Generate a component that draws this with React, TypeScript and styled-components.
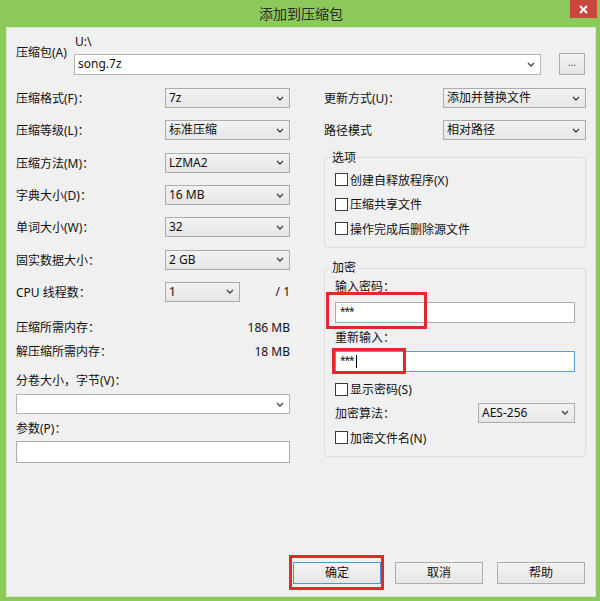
import React from 'react'
import styled, { createGlobalStyle } from 'styled-components'

const GlobalStyle = createGlobalStyle`
    html, body {
        margin: 0;
        padding: 0;
        background: #8bc95b;
    }
    * {
        box-sizing: border-box;
    }
`

const font = `"Noto Sans", "Noto Sans CJK SC", sans-serif`

const Window = styled.div`
    width: 600px;
    height: 601px;
    background: #8bc95b;
    padding: 0 4px 4px 6px;
    display: flex;
    flex-direction: column;
    font-family: ${font};
    font-size: 12px;
    color: #111;
`

const TitleBar = styled.div`
    height: 27px;
    display: grid;
    grid-template-columns: 1fr auto 1fr;
    align-items: start;
`

const Title = styled.div`
    grid-column: 2;
    line-height: 27px;
    font-size: 14px;
    color: #2a2a2a;
`

const CloseButton = styled.div`
    grid-column: 3;
    justify-self: end;
    width: 27px;
    height: 18px;
    margin-right: -1px;
    background: #c9473f;
    display: flex;
    align-items: center;
    justify-content: center;
`

const Body = styled.div`
    flex: 1;
    background: #f0f0f0;
    border: 1px solid #dbe8cf;
    padding: 7px 9px 12px 9px;
    display: flex;
    flex-direction: column;
`

const ArchiveRow = styled.div`
    display: flex;
`

const ArchiveLabel = styled.div`
    width: 58px;
    padding-top: 11px;
    line-height: 14px;
`

const ArchiveField = styled.div`
    flex: 1;
    display: flex;
    flex-direction: column;
`

const PathText = styled.div`
    line-height: 14px;
    padding-left: 1px;
    margin-bottom: 4px;
`

const ComboLine = styled.div`
    display: flex;
    align-items: center;
    gap: 18px;
`

const BrowseButton = styled.div`
    width: 26px;
    height: 22px;
    border: 1px solid #acacac;
    background: linear-gradient(#f2f2f2, #e5e5e5);
    display: flex;
    align-items: center;
    justify-content: center;
    font-size: 10px;
    color: #555;
    padding-bottom: 4px;
`

const Main = styled.div`
    display: grid;
    grid-template-columns: 274px 262px;
    column-gap: 34px;
    margin-top: 7px;
`

const Column = styled.div`
    display: flex;
    flex-direction: column;
`

const FieldRow = styled.div<{ $labelWidth: number }>`
    height: 32.3px;
    display: grid;
    grid-template-columns: ${p => p.$labelWidth}px 1fr;
    align-items: center;
`

const CpuCell = styled.div`
    display: flex;
    align-items: center;
    justify-content: space-between;
`

const SelectBox = styled.div<{ $width?: number; $height?: number; $editable?: boolean }>`
    width: ${p => (p.$width ? `${p.$width}px` : '100%')};
    height: ${p => p.$height || 20}px;
    border: 1px solid ${p => (p.$editable ? '#b5b5b5' : '#acacac')};
    background: ${p => (p.$editable ? '#ffffff' : 'linear-gradient(#f3f3f3, #e6e6e6)')};
    display: flex;
    align-items: center;
    justify-content: space-between;
    padding: 0 5px 0 3px;
    line-height: 14px;
`

const InfoRow = styled.div<{ $top?: number }>`
    height: 24px;
    margin-top: ${p => p.$top || 0}px;
    display: flex;
    align-items: center;
    justify-content: space-between;
`

const Label = styled.div<{ $top?: number }>`
    line-height: 14px;
    margin-top: ${p => p.$top || 0}px;
`

const Spaced = styled.div<{ $top: number }>`
    margin-top: ${p => p.$top}px;
`

const TextInput = styled.div<{ $height?: number; $focused?: boolean }>`
    width: 100%;
    height: ${p => p.$height || 21}px;
    background: #ffffff;
    border: 1px solid ${p => (p.$focused ? '#569de5' : '#abadb3')};
    display: flex;
    align-items: center;
    padding: 0 4px;
    line-height: 14px;
`

const Stars = styled.span`
    font-size: 10px;
    letter-spacing: -1px;
    margin-top: -3px;
`

const Caret = styled.span`
    display: inline-block;
    width: 1px;
    height: 13px;
    background: #000;
    margin-left: 2px;
`

const Group = styled.fieldset<{ $top: number }>`
    margin: ${p => p.$top}px 0 0 0;
    padding: 0 10px 6px 10px;
    border: 1px solid #dcdcdc;
    border-radius: 3px;
    min-width: 0;
`

const Legend = styled.legend`
    margin-left: -4px;
    padding: 0 1px;
    line-height: 14px;
`

const GroupContent = styled.div<{ $top: number }>`
    padding-top: ${p => p.$top}px;
    display: flex;
    flex-direction: column;
`

const CheckRow = styled.div<{ $top?: number }>`
    height: 24.5px;
    margin-top: ${p => p.$top || 0}px;
    display: flex;
    align-items: center;
    gap: 2px;
`

const CheckBox = styled.span`
    width: 13px;
    height: 13px;
    border: 1px solid #3a3a3a;
    background: #ffffff;
    flex-shrink: 0;
`

const AlgoRow = styled.div`
    height: 22px;
    display: flex;
    align-items: center;
    justify-content: space-between;
`

const Marked = styled.div`
    position: relative;
`

const RedMark = styled.div<{ $x: number; $y: number; $w: number; $h: number }>`
    position: absolute;
    left: ${p => p.$x}px;
    top: ${p => p.$y}px;
    width: ${p => p.$w}px;
    height: ${p => p.$h}px;
    border: 3px solid #e5262c;
    pointer-events: none;
`

const ButtonBar = styled.div`
    margin-top: auto;
    display: flex;
    justify-content: flex-end;
    gap: 14px;
    padding-right: 1px;
`

const Button = styled.div<{ $default?: boolean }>`
    width: 88px;
    height: 22px;
    border: 1px solid ${p => (p.$default ? '#3c9ce0' : '#acacac')};
    background: linear-gradient(#f3f3f3, #e5e5e5);
    display: flex;
    align-items: center;
    justify-content: center;
    line-height: 14px;
`

const Chevron: React.FC = () => (
    <svg width="8" height="5" viewBox="0 0 8 5">
        <path d="M1 1 L4 4 L7 1" fill="none" stroke="#444" strokeWidth="1.4" />
    </svg>
)

const Select: React.FC<{ value?: string; width?: number; height?: number; editable?: boolean }> = ({ value, width, height, editable }) => (
    <SelectBox $width={width} $height={height} $editable={editable}>
        <span>{value}</span>
        <Chevron />
    </SelectBox>
)

const leftFields = [
    { label: '压缩格式(F)：', value: '7z' },
    { label: '压缩等级(L)：', value: '标准压缩' },
    { label: '压缩方法(M)：', value: 'LZMA2' },
    { label: '字典大小(D)：', value: '16 MB' },
    { label: '单词大小(W)：', value: '32' },
    { label: '固实数据大小：', value: '2 GB' },
]

const options = ['创建自释放程序(X)', '压缩共享文件', '操作完成后删除源文件']

const App: React.FC = () => {
    return (
        <>
            <GlobalStyle />
            <Window>
                <TitleBar>
                    <Title>添加到压缩包</Title>
                    <CloseButton>
                        <svg width="9" height="9" viewBox="0 0 9 9">
                            <path d="M1 1 L8 8 M8 1 L1 8" stroke="#fff" strokeWidth="2" />
                        </svg>
                    </CloseButton>
                </TitleBar>
                <Body>
                    <ArchiveRow>
                        <ArchiveLabel>压缩包(A)</ArchiveLabel>
                        <ArchiveField>
                            <PathText>U:\</PathText>
                            <ComboLine>
                                <Select value="song.7z" width={467} height={21} editable />
                                <BrowseButton>...</BrowseButton>
                            </ComboLine>
                        </ArchiveField>
                    </ArchiveRow>

                    <Main>
                        <Column>
                            {leftFields.map(item => (
                                <FieldRow key={item.label} $labelWidth={149}>
                                    <span>{item.label}</span>
                                    <Select value={item.value} />
                                </FieldRow>
                            ))}
                            <FieldRow $labelWidth={149}>
                                <span>CPU 线程数：</span>
                                <CpuCell>
                                    <Select value="1" width={75} />
                                    <span>/ 1</span>
                                </CpuCell>
                            </FieldRow>
                            <InfoRow $top={7}>
                                <span>压缩所需内存：</span>
                                <span>186 MB</span>
                            </InfoRow>
                            <InfoRow>
                                <span>解压缩所需内存：</span>
                                <span>18 MB</span>
                            </InfoRow>
                            <Label $top={11}>分卷大小，字节(V)：</Label>
                            <Spaced $top={6}>
                                <Select editable />
                            </Spaced>
                            <Label $top={8}>参数(P)：</Label>
                            <Spaced $top={5}>
                                <TextInput $height={22} />
                            </Spaced>
                        </Column>

                        <Column>
                            <FieldRow $labelWidth={119}>
                                <span>更新方式(U)：</span>
                                <Select value="添加并替换文件" />
                            </FieldRow>
                            <FieldRow $labelWidth={119}>
                                <span>路径模式</span>
                                <Select value="相对路径" />
                            </FieldRow>

                            <Group $top={4}>
                                <Legend>选项</Legend>
                                <GroupContent $top={3}>
                                    {options.map(text => (
                                        <CheckRow key={text}>
                                            <CheckBox />
                                            <span>{text}</span>
                                        </CheckRow>
                                    ))}
                                </GroupContent>
                            </Group>

                            <Group $top={13}>
                                <Legend>加密</Legend>
                                <GroupContent $top={5}>
                                    <Label>输入密码：</Label>
                                    <Spaced $top={8}>
                                        <Marked>
                                            <TextInput $height={21}><Stars>***</Stars></TextInput>
                                            <RedMark $x={-9} $y={-10} $w={101} $h={37} />
                                        </Marked>
                                    </Spaced>
                                    <Label $top={8}>重新输入：</Label>
                                    <Spaced $top={6}>
                                        <Marked>
                                            <TextInput $height={21} $focused><Stars>***</Stars><Caret /></TextInput>
                                            <RedMark $x={-3} $y={-3} $w={74} $h={26} />
                                        </Marked>
                                    </Spaced>
                                    <CheckRow $top={5}>
                                        <CheckBox />
                                        <span>显示密码(S)</span>
                                    </CheckRow>
                                    <AlgoRow>
                                        <span>加密算法：</span>
                                        <Select value="AES-256" width={97} />
                                    </AlgoRow>
                                    <CheckRow $top={2}>
                                        <CheckBox />
                                        <span>加密文件名(N)</span>
                                    </CheckRow>
                                </GroupContent>
                            </Group>
                        </Column>
                    </Main>

                    <ButtonBar>
                        <Marked>
                            <Button $default>确定</Button>
                            <RedMark $x={-4} $y={-7} $w={95} $h={35} />
                        </Marked>
                        <Button>取消</Button>
                        <Button>帮助</Button>
                    </ButtonBar>
                </Body>
            </Window>
        </>
    )
}

export default App
